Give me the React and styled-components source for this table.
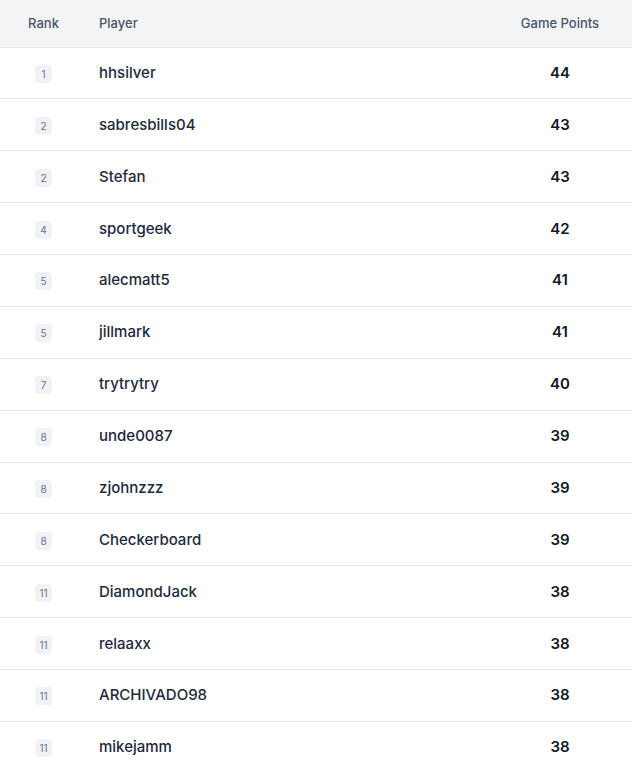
import React from "react";
import styled, { createGlobalStyle } from "styled-components";

const Global = createGlobalStyle`
  html, body { margin: 0; padding: 0; background: #fff; }
  body { font-family: Inter, "Noto Sans", sans-serif; -webkit-font-smoothing: antialiased; }
`;

const Table = styled.table`
  width: 632px;
  border-collapse: collapse;
  table-layout: fixed;
`;

const HeadRow = styled.tr`
  background: #f3f4f6;
  height: 47px;
  border-bottom: 1px solid #e5e7eb;
`;

const Th = styled.th`
  font-size: 13px;
  font-weight: 500;
  color: #475569;
  text-align: ${(p) => p.$align || "left"};
  padding: 0 ${(p) => (p.$align === "left" ? "12px" : "0")} 1px;
  vertical-align: middle;
  line-height: 16px;
`;

const Row = styled.tr`
  height: 51.875px;
  border-bottom: 1px solid #e5e7eb;
`;

const Td = styled.td`
  text-align: ${(p) => p.$align || "left"};
  padding: 0 ${(p) => (p.$align === "left" ? "12px" : "0")} 2px;
  vertical-align: middle;
`;

const Badge = styled.span`
  display: inline-flex;
  align-items: center;
  justify-content: center;
  min-width: 17px;
  height: 18px;
  padding: 0 2px;
  box-sizing: border-box;
  border-radius: 4px;
  background: #f1f2f6;
  color: #64748b;
  font-size: 10px;
  font-weight: 400;
  margin-top: 4px;
`;

const Name = styled.span`
  font-size: 15px;
  font-weight: 500;
  color: #1e293b;
`;

const Points = styled.span`
  font-size: 15px;
  font-weight: 600;
  color: #111827;
`;

const data = [
  [1, "hhsilver", 44],
  [2, "sabresbills04", 43],
  [2, "Stefan", 43],
  [4, "sportgeek", 42],
  [5, "alecmatt5", 41],
  [5, "jillmark", 41],
  [7, "trytrytry", 40],
  [8, "unde0087", 39],
  [8, "zjohnzzz", 39],
  [8, "Checkerboard", 39],
  [11, "DiamondJack", 38],
  [11, "relaaxx", 38],
  [11, "ARCHIVADO98", 38],
  [11, "mikejamm", 38],
];

export default function App() {
  return (
    <>
      <Global />
      <Table>
        <colgroup>
          <col style={{ width: 87 }} />
          <col />
          <col style={{ width: 144 }} />
        </colgroup>
        <thead>
          <HeadRow>
            <Th $align="center">Rank</Th>
            <Th $align="left">Player</Th>
            <Th $align="center">Game Points</Th>
          </HeadRow>
        </thead>
        <tbody>
          {data.map(([rank, name, pts], i) => (
            <Row key={i}>
              <Td $align="center">
                <Badge>{rank}</Badge>
              </Td>
              <Td $align="left">
                <Name>{name}</Name>
              </Td>
              <Td $align="center">
                <Points>{pts}</Points>
              </Td>
            </Row>
          ))}
        </tbody>
      </Table>
    </>
  );
}
